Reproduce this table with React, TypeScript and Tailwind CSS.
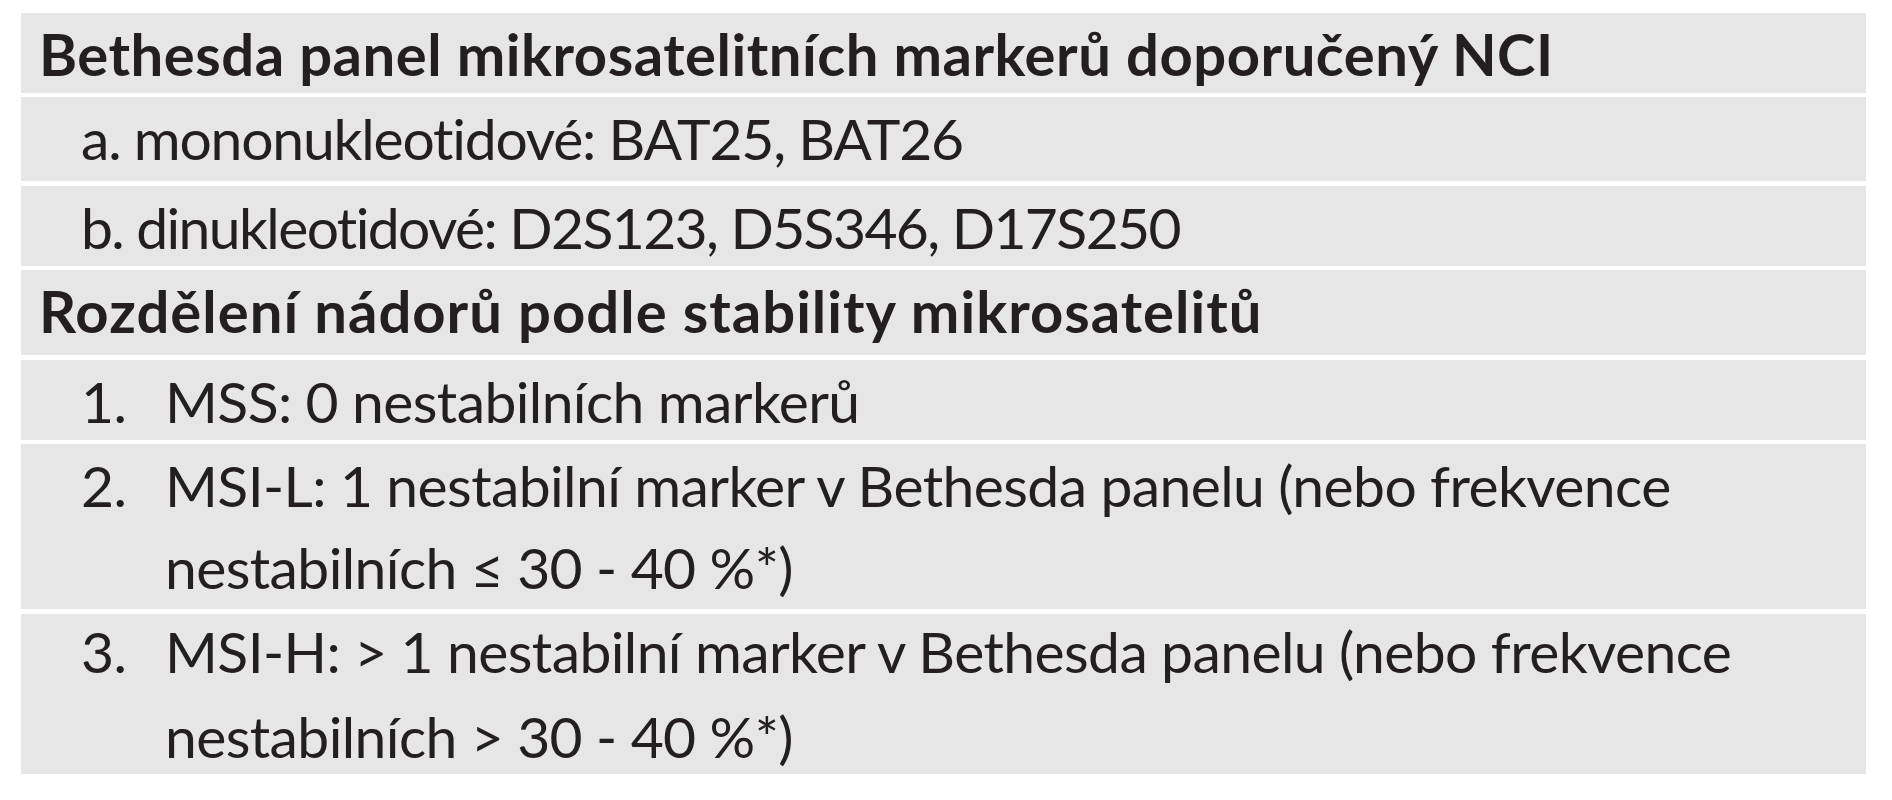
const rowBase = "bg-[#e6e6e6] text-[#231f20] whitespace-nowrap"

const Heading = ({ children, h }: { children: React.ReactNode; h: string }) => (
  <div className={`${rowBase} ${h} pl-[18px] pt-[1px] font-bold text-[58px] leading-[80px]`}>
    {children}
  </div>
)

const Sub = ({ children, h }: { children: React.ReactNode; h: string }) => (
  <div className={`${rowBase} ${h} pl-[60px] pt-[1px] text-[57px] leading-[80px]`}>
    {children}
  </div>
)

const Numbered = ({ n, lines, h, lh }: { n: string; lines: string[]; h: string; lh: string }) => (
  <div className={`${rowBase} ${h} flex pl-[60px] text-[57px] tracking-[-0.6px] ${lh}`}>
    <div className="w-[84px] shrink-0">{n}</div>
    <div>
      {lines.map((l) => (
        <div key={l}>{l}</div>
      ))}
    </div>
  </div>
)

export default function App() {
  return (
    <div className="h-[800px] bg-white pt-[12.7px] pl-[21px] font-['Lato',sans-serif]">
      <div className="w-[1845px] flex flex-col gap-[4.5px]">
        <Heading h="h-[80px] tracking-[0.5px]">Bethesda panel mikrosatelitních markerů doporučený NCI</Heading>
        <Sub h="h-[84px] tracking-[-1.2px]">a. mononukleotidové: BAT25, BAT26</Sub>
        <Sub h="h-[80px] tracking-[-1.6px]">b. dinukleotidové: D2S123, D5S346, D17S250</Sub>
        <Heading h="h-[85px] tracking-[1px]">Rozdělení nádorů podle stability mikrosatelitů</Heading>
        <Numbered h="h-[80px] pt-[1px]" lh="leading-[80px]" n="1." lines={["MSS: 0 nestabilních markerů"]} />
        <Numbered
          h="h-[165px]"
          lh="leading-[82px]"
          n="2."
          lines={["MSI-L: 1 nestabilní marker v Bethesda panelu (nebo frekvence", "nestabilních ≤ 30 - 40 %*)"]}
        />
        <Numbered
          h="h-[160px] pt-[0px]"
          lh="leading-[85px] [&>div]:-mt-[5px]"
          n="3."
          lines={["MSI-H: > 1 nestabilní marker v Bethesda panelu (nebo frekvence", "nestabilních > 30 - 40 %*)"]}
        />
      </div>
    </div>
  )
}
